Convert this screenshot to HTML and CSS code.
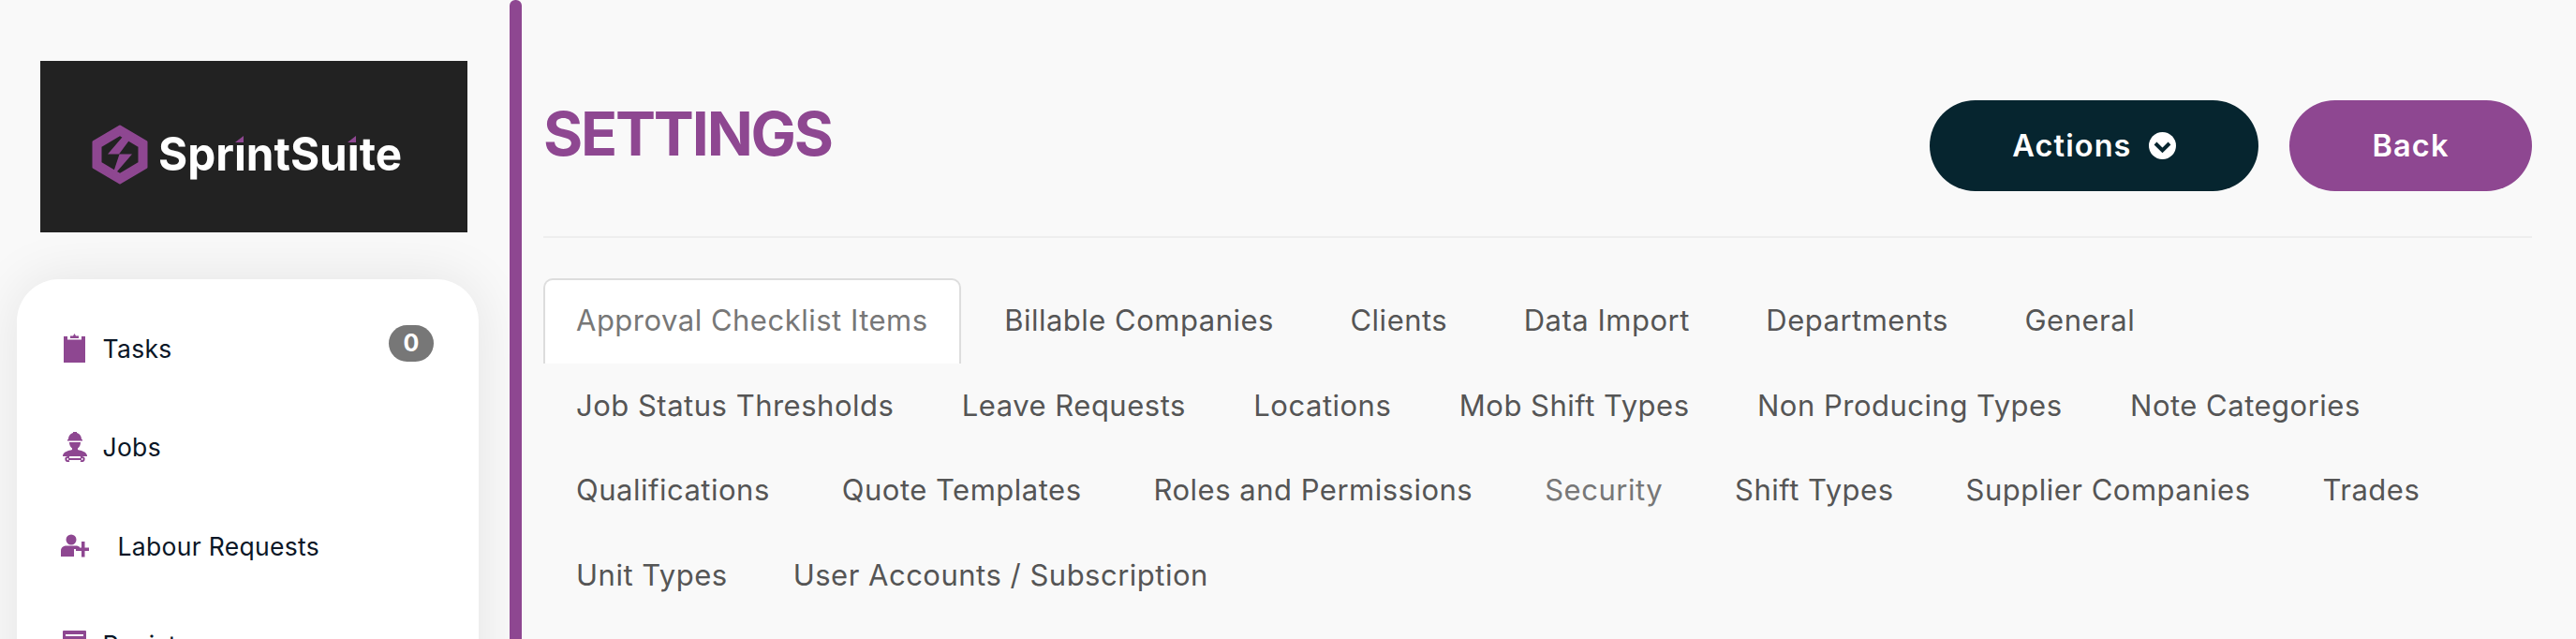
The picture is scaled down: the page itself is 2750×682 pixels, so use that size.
FILE: index.html
```html
<!DOCTYPE html>
<html lang="en">
<head>
  <meta charset="UTF-8">
  <meta name="viewport" content="width=device-width, initial-scale=1">
  <title>Settings - SprintSuite</title>
  <link rel="stylesheet" href="styles.css">
</head>
<body>
  <div class="page">
    <aside class="sidebar">
      <div class="logo">
        <svg class="logo-art" viewBox="0 0 456 183" width="456" height="183">
          <path class="logo-hex" fill-rule="evenodd" d="M85 70 L113 86.500 V113.500 L85 130 L57 113.500 V86.500 Z M85 78.500 L64 91 V109 L85 121.500 L106 109 V91 Z"/>
          <path class="logo-bolt" d="M93 75 L72 99.500 H84.500 L76 125 L98 99.500 H84 L100 78 Z"/>
          <text class="logo-text" x="126" y="117" textLength="260" lengthAdjust="spacingAndGlyphs">SprintSuite</text>
          <rect class="logo-cover" x="207" y="76" width="11" height="12"/>
          <path class="logo-tip" d="M217 80 V87 H208 Z"/>
          <rect class="logo-cover" x="327" y="76" width="11" height="12"/>
          <path class="logo-tip" d="M337 80 V87 H328 Z"/>
        </svg>
      </div>

      <nav class="nav-card">
        <a class="nav-item" href="#">
          <span class="nav-icon">
            <svg viewBox="0 0 23 31" width="23" height="31">
              <path class="icon-fill" d="M0 3 H4 V6.500 H19 V3 H23 V31 H0 Z M7 2.500 H10 L11.500 0 L13 2.500 H16 V5 H7 Z"/>
            </svg>
          </span>
          <span>Tasks</span>
          <span class="badge">0</span>
        </a>
        <a class="nav-item" href="#">
          <span class="nav-icon">
            <svg viewBox="0 0 26 32" width="26" height="32">
              <path class="icon-fill" d="M6 8 C6 3.500 9 1.500 11 1 V0 H15 V1 C17 1.500 20 3.500 20 8 H21 V9.500 H5 V8 Z"/>
              <path class="icon-fill" d="M7 11 H19 C19 14 18 16 16 17.500 V19 C20 20 25 21 26 25 V26 H0 V25 C1 21 6 20 10 19 V17.500 C8 16 7 14 7 11 Z"/>
              <path class="icon-line" d="M6 29 H20"/>
              <path class="icon-line" d="M7 27 C4 26.500 3 28 3.500 29 C3 30.500 5 31.500 7 31 M19 27 C22 26.500 23 28 22.500 29 C23 30.500 21 31.500 19 31"/>
            </svg>
          </span>
          <span>Jobs</span>
        </a>
        <a class="nav-item" href="#">
          <span class="nav-icon">
            <svg viewBox="0 0 30 25" width="30" height="25">
              <circle class="icon-fill" cx="11" cy="6" r="5.500"/>
              <path class="icon-fill" d="M0 24 V18 C0 14 3 12.500 6 12.500 H16 C18 12.500 19 13 20 14 V16 H14 V24 Z"/>
              <path class="icon-fill" d="M22 8 H25.500 V14.500 H30 V18 H25.500 V24.500 H22 V18 H16 V14.500 H22 Z"/>
            </svg>
          </span>
          <span class="nav-label-wide">Labour Requests</span>
        </a>
        <a class="nav-item" href="#">
          <span class="nav-icon">
            <svg viewBox="0 0 25 31" width="25" height="31">
              <path class="icon-fill" d="M1 0 H24 A1 1 0 0 1 25 1 V31 H0 V1 A1 1 0 0 1 1 0 Z"/>
              <path class="icon-gap" d="M3 5 H22"/>
            </svg>
          </span>
          <span>Registers</span>
        </a>
      </nav>
    </aside>

    <div class="divider"></div>

    <main class="content">
      <header class="page-header">
        <h1>SETTINGS</h1>
        <div class="header-actions">
          <button class="btn btn-dark">
            Actions
            <svg viewBox="0 0 29 29" width="29" height="29">
              <circle cx="14.500" cy="14.500" r="14.500" fill="#fff"/>
              <path d="M7 12 L14.500 19.500 L22 12" fill="none" stroke="#06252f" stroke-width="4"/>
            </svg>
          </button>
          <button class="btn btn-purple">Back</button>
        </div>
      </header>

      <div class="tabs">
        <ul class="tab-row row-wide">
          <li><a class="tab active" href="#">Approval Checklist Items</a></li>
          <li><a class="tab" href="#">Billable Companies</a></li>
          <li><a class="tab" href="#">Clients</a></li>
          <li><a class="tab" href="#">Data Import</a></li>
          <li><a class="tab" href="#">Departments</a></li>
          <li><a class="tab" href="#">General</a></li>
        </ul>
        <ul class="tab-row row-tight">
          <li><a class="tab" href="#">Job Status Thresholds</a></li>
          <li><a class="tab" href="#">Leave Requests</a></li>
          <li><a class="tab" href="#">Locations</a></li>
          <li><a class="tab" href="#">Mob Shift Types</a></li>
          <li><a class="tab" href="#">Non Producing Types</a></li>
          <li><a class="tab" href="#">Note Categories</a></li>
        </ul>
        <ul class="tab-row">
          <li><a class="tab" href="#">Qualifications</a></li>
          <li><a class="tab" href="#">Quote Templates</a></li>
          <li><a class="tab" href="#">Roles and Permissions</a></li>
          <li><a class="tab muted" href="#">Security</a></li>
          <li><a class="tab" href="#">Shift Types</a></li>
          <li><a class="tab" href="#">Supplier Companies</a></li>
          <li><a class="tab" href="#">Trades</a></li>
        </ul>
        <ul class="tab-row row-none">
          <li><a class="tab" href="#">Unit Types</a></li>
          <li><a class="tab" href="#">User Accounts / Subscription</a></li>
        </ul>
      </div>
    </main>
  </div>
</body>
</html>
```

FILE: styles.css
```css
html, body {
  margin: 0;
  height: 100%;
  overflow: hidden;
}
body {
  font-family: Inter, "Noto Sans", sans-serif;
  background: #f9f9f9;
}
a {
  text-decoration: none;
}
.page {
  display: flex;
  height: 682px;
}

/* sidebar */
.sidebar {
  width: 544px;
  flex-shrink: 0;
  padding-top: 65px;
  box-sizing: border-box;
}
.logo {
  width: 456px;
  height: 183px;
  margin-left: 43px;
  background: #222222;
}
.logo-art {
  display: block;
}
.logo-hex, .logo-bolt, .logo-tip {
  fill: #8e4791;
}
.logo-hex {
  stroke: #8e4791;
  stroke-width: 3;
  stroke-linejoin: round;
}
.logo-text {
  font-family: Inter, sans-serif;
  font-size: 49px;
  font-weight: 700;
  fill: #ffffff;
}
.logo-cover {
  fill: #222222;
}
.nav-card {
  width: 493px;
  margin: 50px 0 0 18px;
  padding: 21px 48px 0 32px;
  box-sizing: border-box;
  height: 500px;
  background: #ffffff;
  border-radius: 45px;
  box-shadow: 0 0 60px rgba(0,0,0,0.09);
}
.nav-item {
  display: flex;
  align-items: center;
  height: 105.500px;
  color: #0a1626;
  font-size: 26.500px;
  letter-spacing: 0.3px;
}
.nav-icon {
  display: flex;
  justify-content: center;
  width: 59.500px;
  flex-shrink: 0;
}
.nav-icon svg {
  display: block;
}
.nav-label-wide {
  margin-left: 16px;
}
.icon-fill {
  fill: #8e4791;
}
.icon-line {
  fill: none;
  stroke: #8e4791;
  stroke-width: 2;
}
.icon-gap {
  fill: none;
  stroke: #ffffff;
  stroke-width: 2;
}
.badge {
  margin-left: auto;
  margin-bottom: 11px;
  width: 48px;
  height: 39px;
  line-height: 39px;
  border-radius: 20px;
  background: #777777;
  color: #ffffff;
  font-size: 25px;
  font-weight: 700;
  text-align: center;
}

/* purple line between sidebar and content */
.divider {
  width: 13px;
  flex-shrink: 0;
  background: #8e4791;
  border-radius: 6px 6px 0 0;
}

/* main */
.content {
  flex: 1;
  padding: 107px 47px 0 23px;
  min-width: 0;
}
.page-header {
  display: flex;
  justify-content: space-between;
  align-items: flex-start;
  padding-bottom: 48px;
  border-bottom: 2px solid #eeeeee;
}
h1 {
  margin: 0;
  color: #8e4791;
  font-size: 64.500px;
  font-weight: 700;
  line-height: 72px;
  letter-spacing: -2.200px;
}
.header-actions {
  display: flex;
  gap: 33px;
}
.btn {
  display: flex;
  align-items: center;
  gap: 18px;
  height: 97px;
  padding: 0 88.500px;
  border: 0;
  border-radius: 48.500px;
  color: #ffffff;
  font-family: inherit;
  font-size: 32.500px;
  font-weight: 600;
  letter-spacing: 1.100px;
}
.btn-dark {
  background: #06252f;
}
.btn-purple {
  background: #8e4791;
}
.tabs {
  margin-top: 43px;
}
.tab-row {
  display: flex;
  gap: 7px;
  margin: 0;
  padding: 0;
  list-style: none;
}
.row-wide {
  gap: 11.500px;
}
.row-tight {
  gap: 2.500px;
}
.row-none {
  gap: 0;
}
.tab {
  display: block;
  height: 90.500px;
  line-height: 90.500px;
  padding: 0 35px;
  box-sizing: border-box;
  color: #555555;
  font-size: 31px;
  letter-spacing: 0.500px;
}
.tab.muted {
  color: #777777;
}
.tab.active {
  color: #777777;
  background: #ffffff;
  border: 2px solid #dddddd;
  border-bottom: 0;
  border-radius: 10px 10px 0 0;
  padding: 0 33px;
  line-height: 86.500px;
}
```
